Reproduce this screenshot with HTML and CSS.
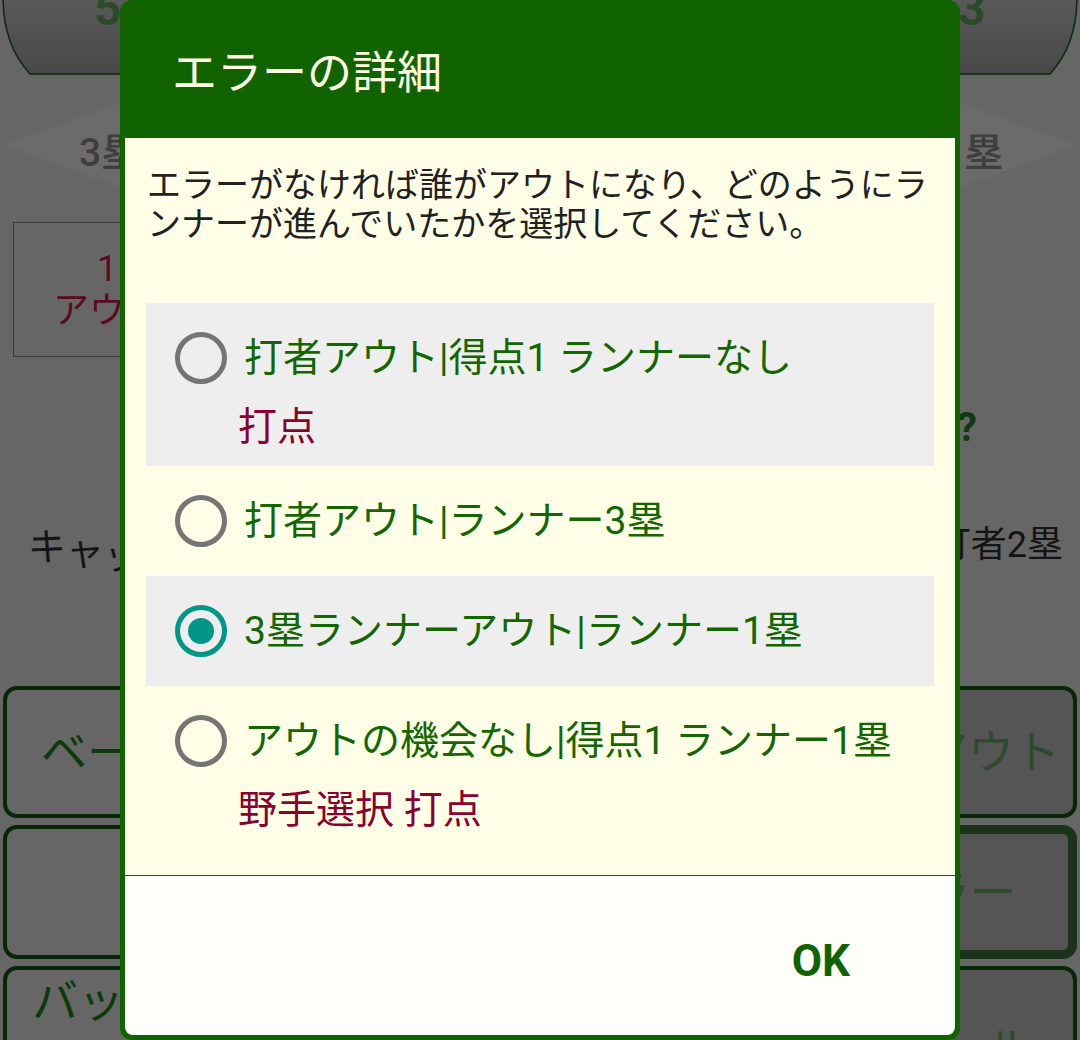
FILE: index.html
```html
<!DOCTYPE html>
<html lang="ja">
<head>
<meta charset="utf-8">
<title>エラーの詳細</title>
<link rel="stylesheet" href="styles.css">
</head>
<body>
<div class="screen">
  <div class="app">
    <div class="scores">
      <svg class="score" viewBox="0 0 540 76" width="540" height="76">
        <defs>
          <linearGradient id="sgl" x1="0" y1="0" x2="0" y2="1">
            <stop offset="0" stop-color="#5a5a5a"/>
            <stop offset="1" stop-color="#484848"/>
          </linearGradient>
        </defs>
        <path d="M3,-4 C3,30 12,54 30,74 H544 V-4 Z" fill="url(#sgl)"/>
        <path d="M3,-4 C3,30 12,54 30,74 H544" fill="none" stroke="#0a2a0a" stroke-width="1.5"/>
        <text class="score-num" x="94" y="25">5</text>
      </svg>
      <svg class="score" viewBox="0 0 540 76" width="540" height="76">
        <defs>
          <linearGradient id="sgr" x1="0" y1="0" x2="0" y2="1">
            <stop offset="0" stop-color="#5a5a5a"/>
            <stop offset="1" stop-color="#484848"/>
          </linearGradient>
        </defs>
        <path d="M537,-4 C537,30 528,54 510,74 H-4 V-4 Z" fill="url(#sgr)"/>
        <path d="M537,-4 C537,30 528,54 510,74 H-4" fill="none" stroke="#0a2a0a" stroke-width="1.5"/>
        <text class="score-num" x="418" y="25">3</text>
      </svg>
    </div>
    <svg class="bases" viewBox="0 0 1080 138" width="1080" height="138">
      <polygon points="3,69 540,-124 1077,69 540,262" fill="#6b6b6b"/>
      <text class="base-txt" x="79" y="90">3塁</text>
      <text class="base-txt" x="942" y="90">1塁</text>
    </svg>
    <div class="info">
      <div class="outs"><span>1</span><span>アウト</span></div>
    </div>
    <div class="question">アウト?</div>
    <div class="result">
      <span class="fielder">キャッチ</span>
      <span class="runner">打者2塁</span>
    </div>
    <div class="buttons">
      <div class="btn left b-hit">ベース</div>
      <div class="btn"></div>
      <div class="btn alt right b-out">アウト</div>
      <div class="btn"></div>
      <div class="btn"></div>
      <div class="btn alt right sel b-err">エラー</div>
      <div class="btn left b-bat">バッター</div>
      <div class="btn"></div>
      <div class="btn alt right b-foul">ファール</div>
    </div>
  </div>

  <div class="dialog" role="dialog" aria-labelledby="dlg-title">
    <div class="dlg-title" id="dlg-title">エラーの詳細</div>
    <div class="dlg-body">
      <p class="dlg-msg">エラーがなければ誰がアウトになり、どのようにランナーが進んでいたかを選択してください。</p>
      <div class="opts" role="radiogroup">
        <div class="opt shade" role="radio" aria-checked="false">
          <div class="opt-row"><span class="radio"></span><span class="opt-label">打者アウト|得点1 ランナーなし</span></div>
          <div class="opt-sub">打点</div>
        </div>
        <div class="opt" role="radio" aria-checked="false">
          <div class="opt-row"><span class="radio"></span><span class="opt-label">打者アウト|ランナー3塁</span></div>
        </div>
        <div class="opt shade" role="radio" aria-checked="true">
          <div class="opt-row"><span class="radio on"></span><span class="opt-label">3塁ランナーアウト|ランナー1塁</span></div>
        </div>
        <div class="opt" role="radio" aria-checked="false">
          <div class="opt-row"><span class="radio"></span><span class="opt-label">アウトの機会なし|得点1 ランナー1塁</span></div>
          <div class="opt-sub">野手選択 打点</div>
        </div>
      </div>
    </div>
    <div class="dlg-foot">
      <button class="ok" type="button">OK</button>
    </div>
  </div>
</div>
</body>
</html>
```

FILE: styles.css
```css
* {
  box-sizing: border-box;
}

html,
body {
  margin: 0;
  padding: 0;
}

body {
  background: #666666;
  font-family: Roboto, "Noto Sans CJK JP", sans-serif;
}

.screen {
  position: relative;
  width: 1080px;
  height: 1040px;
  overflow: hidden;
  background: #666666;
}

/* ---------- background app (dimmed) ---------- */
.app {
  display: grid;
  grid-template-rows: 76px 138px 156px 100px 216px auto;
}

.scores {
  display: flex;
}

.score {
  display: block;
  width: 540px;
  height: 76px;
}

.score-num {
  font-family: Roboto, sans-serif;
  font-weight: 700;
  font-size: 48px;
  fill: #2a4a2a;
}

.bases {
  display: block;
  width: 1080px;
  height: 138px;
}

.base-txt {
  font-family: Roboto, "Noto Sans CJK JP", sans-serif;
  font-weight: 500;
  font-size: 39px;
  fill: #3e3e3e;
}

.info {
  padding: 8px 0 0 13px;
}

.outs {
  width: 188px;
  height: 135px;
  border: 1px solid #3c3c3c;
  display: flex;
  flex-direction: column;
  align-items: center;
  justify-content: center;
  font-size: 36px;
  line-height: 42px;
  color: #5a0b20;
}

.question {
  padding: 34px 103px 0 0;
  text-align: right;
  font-size: 40px;
  line-height: 48px;
  font-weight: 700;
  color: #103a10;
  white-space: nowrap;
}

.result {
  display: flex;
  justify-content: space-between;
  align-items: flex-start;
  padding: 53px 17px 0 28px;
  font-size: 36px;
  line-height: 44px;
  color: #141414;
}

.fielder {
  display: inline-block;
  font-size: 38px;
  transform: rotate(7deg);
  transform-origin: left center;
}

.buttons {
  display: grid;
  grid-template-columns: repeat(3, 1fr);
  grid-template-rows: 132px 134px 166px;
  gap: 7px;
  padding: 0 3px;
}

.btn {
  border: 4px solid #062806;
  border-radius: 14px;
  display: flex;
  align-items: center;
  justify-content: center;
  font-size: 46px;
  line-height: 46px;
  color: #0b3a0b;
  white-space: nowrap;
  overflow: hidden;
}

.btn.left {
  justify-content: flex-start;
}

.btn.right {
  justify-content: flex-end;
}

.btn.alt {
  background: #555555;
  color: #2d4b2d;
}

.btn.sel {
  border-width: 9px;
  border-color: #1a331a;
}

.b-hit {
  padding-left: 34px;
}

.b-bat {
  align-items: flex-start;
  padding: 8px 0 0 25px;
}

.b-out {
  padding-right: 13px;
}

.b-err {
  padding-right: 52px;
}

.b-foul {
  padding-right: 41px;
}

/* ---------- dialog ---------- */
.dialog {
  position: absolute;
  top: 0;
  left: 120px;
  width: 840px;
  height: 1040px;
  padding: 0 5px 5px;
  background: #116300;
  border-radius: 12px;
  display: flex;
  flex-direction: column;
}

.dlg-title {
  flex: none;
  height: 138px;
  display: flex;
  align-items: center;
  padding-left: 47px;
  font-size: 45px;
  color: #fdfde3;
}

.dlg-body {
  flex: 1;
  background: #ffffe8;
}

.dlg-msg {
  margin: 0;
  padding: 28px 8px 0 22px;
  font-size: 34px;
  line-height: 39px;
  color: #212121;
}

.opts {
  margin: 59px 21px 0;
}

.opt {
  display: block;
}

.opt.shade {
  background: #eeeeee;
}

.opt-row {
  display: flex;
  align-items: center;
  height: 110px;
  padding-left: 29px;
}

.radio {
  flex: none;
  width: 52px;
  height: 52px;
  margin-right: 17px;
  border: 5px solid #757575;
  border-radius: 50%;
  display: flex;
  align-items: center;
  justify-content: center;
}

.radio.on {
  border-color: #009688;
}

.radio.on::after {
  content: "";
  width: 26px;
  height: 26px;
  border-radius: 50%;
  background: #009688;
}

.opt-label {
  font-size: 39px;
  line-height: 44px;
  color: #136600;
  white-space: nowrap;
}

.opt-sub {
  margin-top: -8px;
  padding: 0 0 17px 92px;
  font-size: 39px;
  line-height: 44px;
  color: #8a002e;
}

.dlg-foot {
  flex: none;
  height: 160px;
  border-top: 1px solid #116300;
  background: #fffffb;
  border-radius: 0 0 8px 8px;
  display: flex;
  justify-content: flex-end;
  align-items: flex-start;
  padding: 59px 105px 0 0;
}

.ok {
  font-family: Roboto, sans-serif;
  font-weight: 700;
  font-size: 44px;
  line-height: normal;
  color: #116300;
  background: none;
  border: 0;
  padding: 0;
}
```
